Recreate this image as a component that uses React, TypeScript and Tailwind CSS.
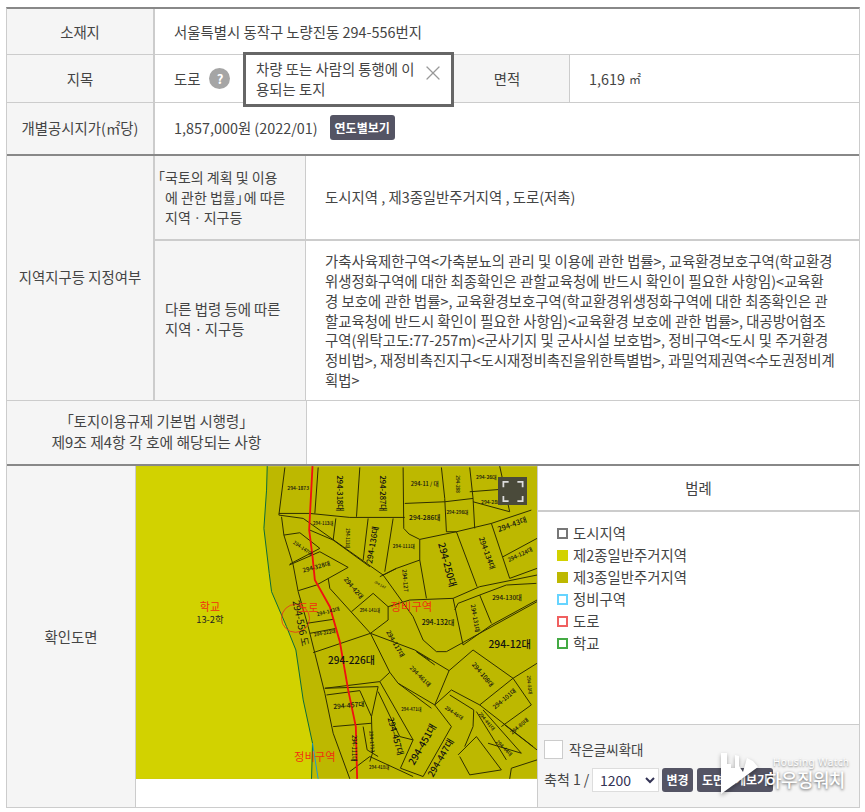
import React from "react";
import { X } from "lucide-react";

const font = { fontFamily: '"Noto Sans CJK KR", "Noto Sans", sans-serif' };

const lines = [
  "M465 22 L447 165 L520 175",
  "M447 160 L540 160 L660 172 L825 172",
  "M565 22 L555 160",
  "M690 22 L680 170",
  "M820 22 L822 205 L838 222 L870 238",
  "M825 130 L945 125 L1030 115",
  "M945 115 L950 215 L980 215",
  "M935 22 L945 115",
  "M1020 22 L1030 115 L1035 205",
  "M1020 95 L1110 88",
  "M1110 18 L1140 155",
  "M1030 125 L1140 155",
  "M870 238 L980 215 L1085 190 L1205 150",
  "M870 238 L870 300 L890 415",
  "M980 215 L1042 380",
  "M1085 190 L1140 355",
  "M1120 290 L1222 235",
  "M1140 355 L1222 325",
  "M455 170 L462 225 L490 315 L505 395 L535 500 L555 580 L585 700 L610 820 L660 957",
  "M462 225 L510 218 L570 265 L480 312",
  "M520 175 L760 345 L850 470 L880 540 L920 575 L950 575 L1222 425",
  "M540 210 L610 240 L720 320",
  "M618 175 L610 240",
  "M715 175 L700 300",
  "M790 175 L765 335",
  "M478 315 L570 275 L655 322 L560 375 L505 392",
  "M595 355 L600 385 L722 520 L780 637 L750 665 L585 685",
  "M722 520 L855 570 L958 632 L915 735 L805 670 L780 637",
  "M722 520 L775 480 L775 440 L840 420 L970 415 L1000 555",
  "M665 455 L730 400 L775 440",
  "M530 490 L610 478",
  "M540 520 L620 505",
  "M550 578 L722 520",
  "M585 685 L745 680",
  "M590 705 L690 692 L725 770 L728 880 L720 905",
  "M610 800 L725 790",
  "M725 770 L745 680",
  "M750 665 L850 840 L812 925 L880 950 L965 800 L915 735",
  "M745 695 L810 830 L850 840",
  "M750 350 L800 325 L760 345",
  "M800 325 L870 300",
  "M970 415 L1050 380 L1222 345",
  "M975 450 L985 430 L1050 405 L1085 490",
  "M1050 405 L1130 375 L1220 370",
  "M1000 555 L1085 495 L1222 420",
  "M958 632 L1030 570 L1150 655 L1222 610",
  "M965 690 L1050 735 L1150 655",
  "M965 690 L915 735",
  "M960 705 L1032 750 L1030 800 L1005 860",
  "M1050 735 L1210 860",
  "M1040 755 L1130 900",
  "M1150 655 L1205 735 L1115 800",
  "M1125 795 L1222 870",
  "M1060 750 L1175 880 L1075 850",
  "M985 885 L1040 830 L1115 930 L1020 945 L990 890",
  "M660 935 L720 890 L850 950",
  "M1140 957 L1145 925 L1222 900",
  "M900 600 L860 575 L915 615",
  "M805 670 L905 745",
  "M700 800 L712 870 L745 890",
];

const labels: [string, number, number, number, number][] = [
  ["294-318대", 628, 100, 90, 23],
  ["294-287대", 758, 100, 90, 23],
  ["294-1873", 505, 86, 0, 15],
  ["294-11 / 대", 885, 72, 0, 17],
  ["294-288", 982, 72, 90, 14],
  ["294-26대", 1070, 52, 0, 15],
  ["294-28대", 1085, 128, 0, 15],
  ["294-286대", 885, 173, 0, 20],
  ["294-296대", 983, 158, 0, 14],
  ["294-43대", 1148, 195, -20, 22],
  ["294-134대", 1070, 280, 70, 22],
  ["294-124대", 1172, 285, -25, 17],
  ["294-250대", 950, 315, 75, 29],
  ["294-136대", 730, 255, -80, 24],
  ["294-113대", 580, 190, 0, 13],
  ["294-111대", 652, 235, 90, 13],
  ["294-111대", 822, 259, 0, 14],
  ["294-147대", 518, 265, 35, 14],
  ["294-328대", 560, 322, -15, 18],
  ["294-42대", 670, 385, 50, 19],
  ["294-141대", 720, 451, 0, 13],
  ["294-127", 825, 362, 85, 18],
  ["294-147", 750, 375, 30, 10],
  ["294-130대", 1132, 415, 0, 19],
  ["294-132대", 925, 488, 0, 21],
  ["294-131대", 1035, 475, 80, 18],
  ["294-12대", 1140, 557, 0, 31],
  ["294-143대", 595, 456, -15, 15],
  ["294-222대", 585, 520, -10, 14],
  ["294-226대", 665, 604, 0, 30],
  ["294-117대", 795, 552, 60, 19],
  ["294-461대", 870, 650, 45, 17],
  ["294-108대", 1058, 645, 50, 19],
  ["294-101대", 1125, 718, -40, 18],
  ["294-81대", 1198, 675, 85, 14],
  ["294-80대", 1170, 800, -40, 16],
  ["294-457대", 657, 738, -5, 20],
  ["294-457대", 795, 830, 75, 25],
  ["294-111대", 672, 865, 90, 17],
  ["294-1713", 725, 845, 85, 15],
  ["294-471대", 845, 750, 0, 13],
  ["294-451대", 880, 855, -60, 29],
  ["294-447대", 935, 895, -60, 27],
  ["294-46대", 972, 760, 35, 15],
  ["294-441대", 1070, 785, 50, 14],
  ["294-44대", 1122, 865, 45, 15],
  ["294-418대", 748, 925, 0, 13],
];

function Map() {
  return (
    <svg viewBox="18 18 1204 939" className="block w-[401px] h-[313px]" style={font}>
      <rect x="18" y="18" width="1204" height="939" fill="#bdb800" />
      <path d="M18 18 L412 18 L410 90 L402 205 L418 340 L425 395 L470 500 L498 570 L520 720 L548 850 L545 957 L18 957 Z" fill="#d2d200" />
      <path d="M412 18 L410 90 L402 205 L418 340 L425 395 L470 500 L498 570 L520 720 L548 850 L545 957" fill="none" stroke="#0b6b3a" strokeWidth="3" />
      <path d="M548 850 L565 957" fill="none" stroke="#1c9bd0" strokeWidth="3" />
      {lines.map((d, i) => (
        <path key={i} d={d} fill="none" stroke="#2e2e00" strokeWidth="3" />
      ))}
      <path d="M548 18 L540 170 L538 210 L548 290 L555 360 L600 440 L630 545 L655 690 L678 800 L682 957" fill="none" stroke="#f01010" strokeWidth="5.5" />
      <circle cx="497" cy="475" r="42" fill="none" stroke="#e83020" strokeWidth="2.5" />
      {labels.map(([t, x, y, r, s], i) => (
        <text key={i} x={x} y={y} fontSize={s} fill="#111" fontWeight={500} textAnchor="middle" dominantBaseline="middle" transform={`rotate(${r} ${x} ${y})`}>
          {t}
        </text>
      ))}
      <text x="510" y="490" fontSize="29" fill="#111" textAnchor="middle" dominantBaseline="middle" transform="rotate(78 510 490)">294-556 도</text>
      <text x="240" y="445" fontSize="33" fill="#f03010" textAnchor="middle" dominantBaseline="middle">학교</text>
      <text x="240" y="480" fontSize="28" fill="#222" textAnchor="middle" dominantBaseline="middle">13-2학</text>
      <text x="535" y="446" fontSize="33" fill="#f03010" textAnchor="middle" dominantBaseline="middle">도로</text>
      <text x="845" y="445" fontSize="34" fill="#f03010" textAnchor="middle" dominantBaseline="middle">정비구역</text>
      <text x="555" y="895" fontSize="34" fill="#f03010" textAnchor="middle" dominantBaseline="middle">정비구역</text>
    </svg>
  );
}

const legend: [string, string][] = [
  ["border-[#777777] bg-white", "도시지역"],
  ["border-[#d2d200] bg-[#d2d200]", "제2종일반주거지역"],
  ["border-[#bdb800] bg-[#bdb800]", "제3종일반주거지역"],
  ["border-[#66d4ff] bg-white", "정비구역"],
  ["border-[#f06060] bg-white", "도로"],
  ["border-[#44aa44] bg-white", "학교"],
];

function Label({ className, children }: { className: string; children: React.ReactNode }) {
  return (
    <div className={`flex items-center justify-center bg-[#f5f5f5] text-center shrink-0 ${className}`}>{children}</div>
  );
}

export default function App() {
  return (
    <div className="relative w-[865px] h-[812px] bg-white overflow-hidden text-[#444444] text-[14.4px] pt-[7px] pl-[6px]" style={font}>
      <div className="w-[854px] border-t-2 border-t-[#888888] border-l border-r border-[#cccccc]">
        {/* 소재지 */}
        <div className="flex h-[46px] border-b border-[#cccccc]">
          <Label className="w-[148px] border-r-2 border-[#cccccc]">소재지</Label>
          <div className="flex items-center pl-[19px]">서울특별시 동작구 노량진동 294-556번지</div>
        </div>
        {/* 지목 */}
        <div className="flex h-[48px] border-b border-[#cccccc]">
          <Label className="w-[148px] border-r-2 border-[#cccccc]">지목</Label>
          <div className="relative flex items-center pl-[19px] w-[290px] shrink-0">
            도로
            <span className="ml-[9px] flex items-center justify-center w-[21px] h-[21px] rounded-full bg-[#a5a5a5] text-white font-bold text-[13px]">?</span>
            <div className="absolute z-10 left-[88px] top-[-3px] w-[211px] h-[55px] bg-white border-[3px] border-[#666666] pl-[10px] pt-[4px] pr-[30px] leading-[20px]">
              차량 또는 사람의 통행에 이용되는 토지
              <X className="absolute right-[6px] top-[6px] text-[#999999]" size={24} strokeWidth={1.2} />
            </div>
          </div>
          <Label className="w-[125px] border-r border-[#cccccc]">면적</Label>
          <div className="flex items-center pl-[19px]">
            1,619 <span className="ml-1 text-[12px]">㎡</span>
          </div>
        </div>
        {/* 개별공시지가 */}
        <div className="flex h-[53px] border-b-2 border-b-[#888888]">
          <Label className="w-[148px] border-r-2 border-[#cccccc] pb-[2px]">개별공시지가(㎡당)</Label>
          <div className="flex items-center pl-[19px] pb-[2px]">
            1,857,000원 (2022/01)
            <span className="ml-[12px] flex items-center justify-center w-[65px] h-[25px] rounded-[3px] bg-[#545464] text-white text-[12px] font-bold">연도별보기</span>
          </div>
        </div>
        {/* 지역지구 */}
        <div className="flex border-b border-[#cccccc]">
          <Label className="w-[148px] border-r-2 border-[#cccccc] pb-[2px]">지역지구등 지정여부</Label>
          <div className="flex-1">
            <div className="flex h-[85px] border-b-2 border-[#cccccc]">
              <div className="w-[151px] shrink-0 flex items-center bg-[#f5f5f5] border-r border-[#cccccc] pl-[10px] pb-[2px] leading-[20px] text-[14px]">
                <div>
                  <span className="ml-[-14px]">「</span>국토의 계획 및 이용
                  <br />
                  에 관한 법률<span className="mr-[-6px]">」</span>에 따른
                  <br />
                  지역ㆍ지구등
                </div>
              </div>
              <div className="flex items-center pl-[19px] pb-[2px]">도시지역 , 제3종일반주거지역 , 도로(저촉)</div>
            </div>
            <div className="flex h-[159px]">
              <div className="w-[151px] shrink-0 flex items-center bg-[#f5f5f5] border-r border-[#cccccc] pl-[10px] pb-[4px] leading-[20px]">
                <div>
                  다른 법령 등에 따른
                  <br />
                  지역ㆍ지구등
                </div>
              </div>
              <div className="flex items-center pl-[19px] pr-[4px] leading-[19.8px] whitespace-nowrap">
                <div>
                  가축사육제한구역&lt;가축분뇨의 관리 및 이용에 관한 법률&gt;, 교육환경보호구역(학교환경
                  <br />
                  위생정화구역에 대한 최종확인은 관할교육청에 반드시 확인이 필요한 사항임)&lt;교육환
                  <br />
                  경 보호에 관한 법률&gt;, 교육환경보호구역(학교환경위생정화구역에 대한 최종확인은 관
                  <br />
                  할교육청에 반드시 확인이 필요한 사항임)&lt;교육환경 보호에 관한 법률&gt;, 대공방어협조
                  <br />
                  구역(위탁고도:77-257m)&lt;군사기지 및 군사시설 보호법&gt;, 정비구역&lt;도시 및 주거환경
                  <br />
                  정비법&gt;, 재정비촉진지구&lt;도시재정비촉진을위한특별법&gt;, 과밀억제권역&lt;수도권정비계
                  <br />
                  획법&gt;
                </div>
              </div>
            </div>
          </div>
        </div>
        {/* 토지이용규제 */}
        <div className="flex h-[65px] border-b-2 border-b-[#888888]">
          <Label className="w-[299px] leading-[21px] pb-[4px]">
            <div>
              「토지이용규제 기본법 시행령」
              <br />
              <span className="text-[14.8px]">제9조 제4항 각 호에 해당되는 사항</span>
            </div>
          </Label>
          <div className="flex-1 border-l border-[#cccccc]" />
        </div>
        {/* 확인도면 */}
        <div className="flex h-[342px] border-b border-[#cccccc]">
          <Label className="w-[129px] border-r border-[#cccccc]">확인도면</Label>
          <div className="relative w-[402px] shrink-0 border-r border-[#cccccc]">
            <Map />
            <div className="absolute left-[362px] top-[11px] w-[29px] h-[28px] bg-[#4a4a3a] flex items-center justify-center">
              <svg viewBox="0 0 24 24" className="w-[22px] h-[21px]" fill="none" stroke="#dddddd" strokeWidth="2">
                <path d="M1 7V1H7M17 1H23V7M23 17V23H17M7 23H1V17" />
              </svg>
            </div>
          </div>
          <div className="flex-1 flex flex-col">
            <div className="h-[46px] flex items-center justify-center border-b-2 border-[#cccccc] shrink-0">범례</div>
            <div className="flex-1 pl-[19px] pt-[10px]">
              {legend.map(([c, t]) => (
                <div key={t} className="flex items-center h-[22px] gap-[5px]">
                  <span className={`w-[11px] h-[11px] border-2 ${c}`} />
                  <span>{t}</span>
                </div>
              ))}
            </div>
            <div className="h-[83px] shrink-0 bg-[#f5f5f5] border-t border-[#cccccc] pl-[6px] pt-[14px]">
              <div className="flex items-center gap-[6px] h-[20px] text-[13.5px]">
                <span className="w-[19px] h-[19px] bg-white border border-[#cccccc]" />
                작은글씨확대
              </div>
              <div className="flex items-center mt-[8px] h-[25px]">
                <span className="w-[48px] text-[14px]">축척 1 /</span>
                <select className="w-[67px] h-[24px] bg-white border border-[#dddddd] text-[14px] text-[#333355] pl-[3px]" defaultValue="1200" style={font}>
                  <option>1200</option>
                </select>
                <span className="ml-[3px] flex items-center justify-center w-[31px] h-[24px] rounded-[3px] bg-[#545464] text-white text-[12px] font-bold">변경</span>
                <span className="ml-[4px] flex items-center justify-center w-[76px] h-[24px] rounded-[3px] bg-[#545464] text-white text-[12px] font-bold whitespace-nowrap">도면크게보기</span>
              </div>
            </div>
          </div>
        </div>
      </div>
      {/* watermark */}
      <div className="absolute left-[720px] top-[752px] w-[140px] h-[45px] z-20">
        <svg viewBox="0 0 40 44" className="absolute left-0 top-0 w-[40px] h-[44px] [filter:drop-shadow(0_2px_2px_rgba(0,0,0,0.35))]">
          <path d="M1 1 L7 1 V12 L11 12 L11 16 L15 16 L15 3 L19 4 L19 14 L23 20 L27 6 L33 9 L38 15 L1 42 Z" fill="#ffffff" />
        </svg>
        <div className="absolute left-[53px] top-[4px] text-[10px] tracking-[0.4px] text-white whitespace-nowrap leading-[12px] [text-shadow:0_1px_2px_rgba(0,0,0,0.5)]" style={{ fontFamily: '"Noto Sans", sans-serif' }}>Housing Watch</div>
        <div className="absolute left-[45px] top-[15px] text-[18px] font-medium tracking-[-0.6px] text-white whitespace-nowrap leading-[24px] [text-shadow:0_1px_3px_rgba(0,0,0,0.65)]">하우징워치</div>
      </div>
    </div>
  );
}
